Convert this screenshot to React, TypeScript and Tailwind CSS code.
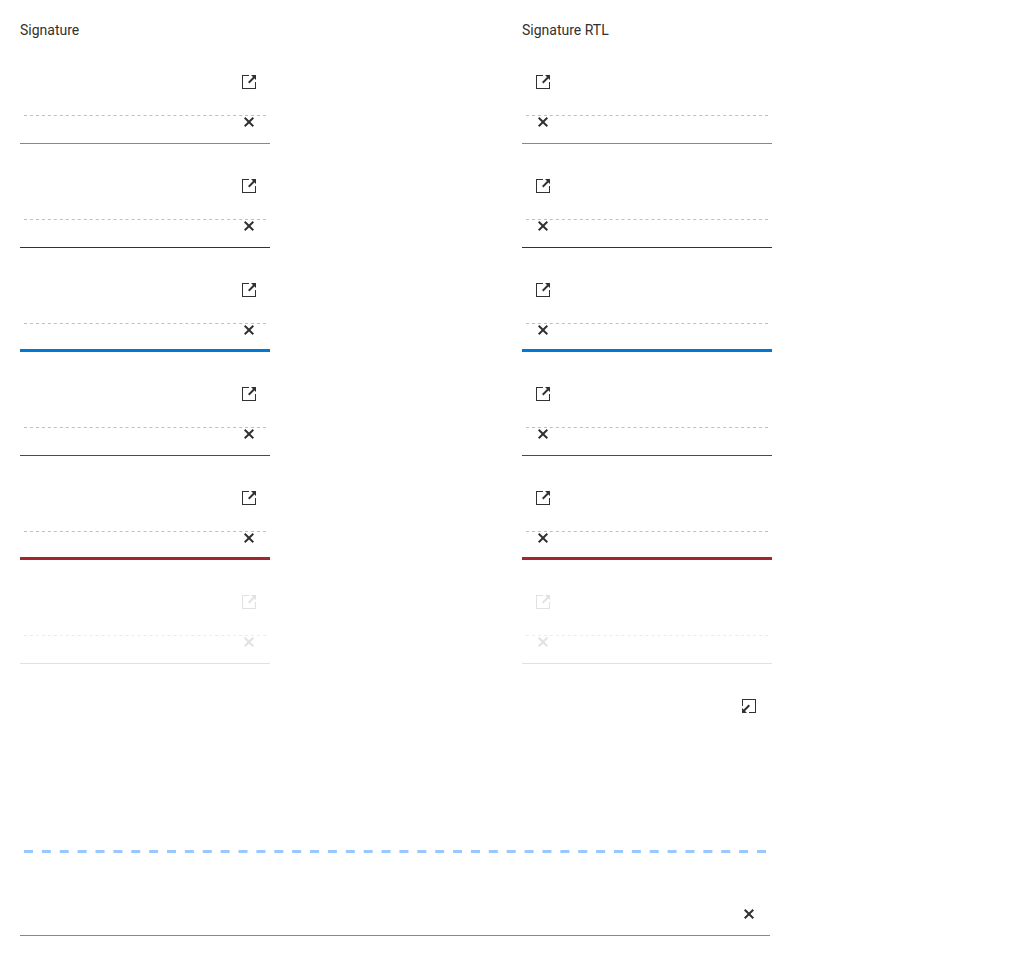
import React from "react";

const states = [
  { line: "h-px bg-[#888888]", faded: false },
  { line: "h-px bg-[#323130]", faded: false },
  { line: "h-[3px] bg-[#0078d4]", faded: false },
  { line: "h-px bg-[#4a4a4a]", faded: false },
  { line: "h-[3px] bg-[#a4262c]", faded: false },
  { line: "h-px bg-[#e1e1e1]", faded: true },
];

function OpenIcon() {
  return (
    <svg viewBox="0 0 14 14" className="block size-3.5" fill="currentColor" aria-hidden="true">
      <path d="M0 0h7v1H1v12h12V7h1v7H0z" />
      <path d="M9 0h5v5l-1.6-1.6-5 5L6 7l5-5z" />
    </svg>
  );
}

function CloseIcon() {
  return (
    <svg viewBox="0 0 10 10" className="block size-2.5" fill="currentColor" aria-hidden="true">
      <path d="M10 1.4 8.6 0 5 3.6 1.4 0 0 1.4 3.6 5 0 8.6 1.4 10 5 6.4 8.6 10 10 8.6 6.4 5z" />
    </svg>
  );
}

function Guide({ large = false, faded = false }: { large?: boolean; faded?: boolean }) {
  return large ? (
    <svg className="mx-1 block h-[3px] w-[742px]" aria-hidden="true">
      <line x1="0" y1="1.5" x2="742" y2="1.5" stroke="#99c7ff" strokeWidth="3" strokeDasharray="9 8.878" />
    </svg>
  ) : (
    <svg className="mx-1 block h-px w-[242px]" aria-hidden="true">
      <line x1="0" y1="0.5" x2="242" y2="0.5" stroke={faded ? "#ececec" : "#99c7ff"} strokeWidth="1" strokeDasharray="3 2.975" />
    </svg>
  );
}

function Column({ title, rtl = false }: { title: string; rtl?: boolean }) {
  return (
    <section className="w-[250px]">
      <h1 className="h-5 text-sm leading-5">{title}</h1>
      <div className="mt-6 flex flex-col gap-6">
        {states.map((s, i) => (
          <div key={i} className={`flex h-20 flex-col ${s.faded ? "text-[#e1e1e1]" : ""}`}>
            <button className={`mt-[11px] block ${rtl ? "ml-3.5 self-start" : "mr-3.5 self-end"}`} aria-label="Maximize">
              <OpenIcon />
            </button>
            <div className="mt-[26px]"><Guide faded={s.faded} /></div>
            <button className={`mt-px block ${rtl ? "ml-4 self-start" : "mr-4 self-end"}`} aria-label="Clear">
              <CloseIcon />
            </button>
            <div className={`mt-auto ${s.line}`} />
          </div>
        ))}
      </div>
    </section>
  );
}

export default function App() {
  return (
    <main className="h-[956px] bg-white px-5 pt-5 font-['Roboto',sans-serif] text-[#323130]">
      <div className="flex gap-[252px]">
        <Column title="Signature" />
        <Column title="Signature RTL" rtl />
      </div>
      <div className="mt-6 flex h-[248px] w-[750px] flex-col">
        <button className="mt-[11px] mr-3.5 block rotate-180 self-end" aria-label="Minimize">
          <OpenIcon />
        </button>
        <div className="mt-[137px]"><Guide large /></div>
        <button className="mt-14 mr-4 block self-end" aria-label="Clear">
          <CloseIcon />
        </button>
        <div className="mt-auto h-px bg-[#888888]" />
      </div>
    </main>
  );
}
